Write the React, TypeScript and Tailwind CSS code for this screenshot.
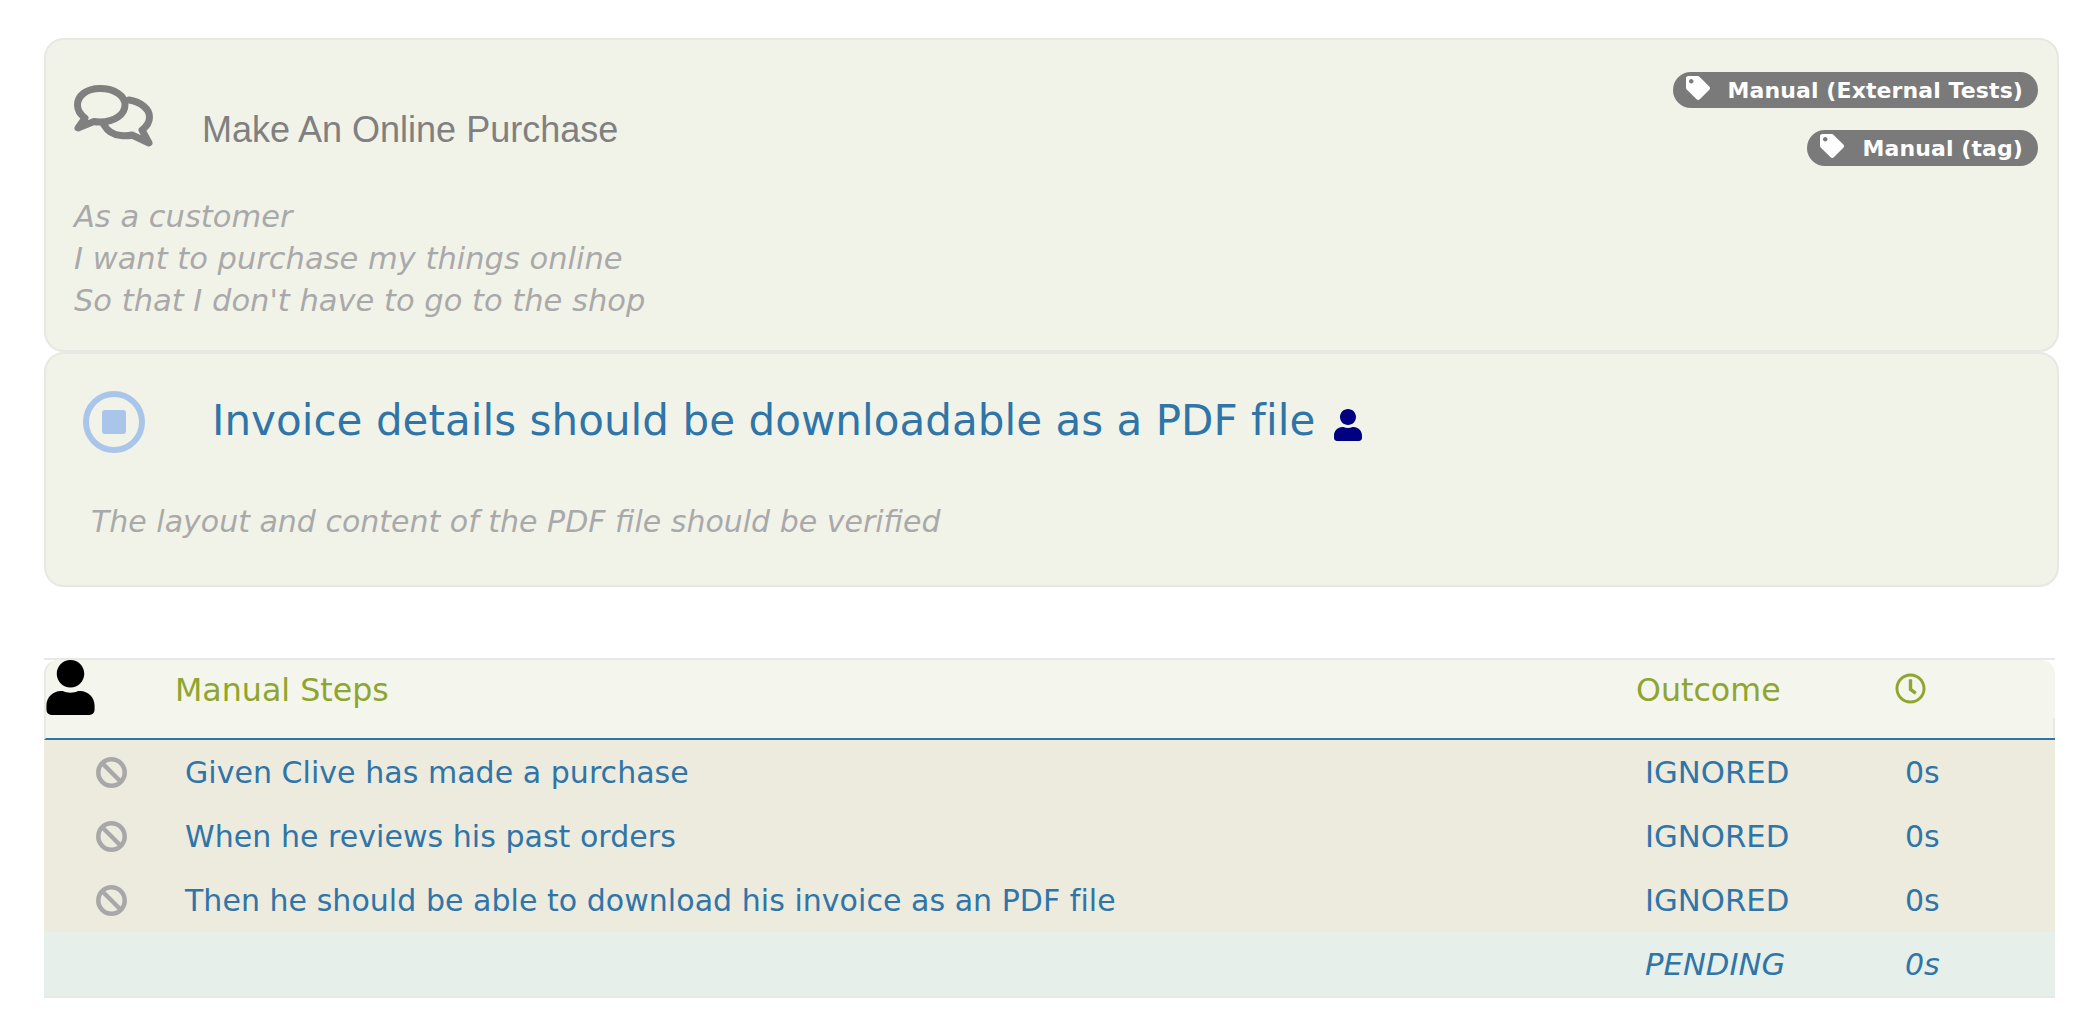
import React from 'react';
import { FaRegClock, FaTag, FaUser } from 'react-icons/fa';

const steps = [
  'Given Clive has made a purchase',
  'When he reviews his past orders',
  'Then he should be able to download his invoice as an PDF file',
];

const ChatIcon = () => (
  <svg viewBox="0 0 79 62" className="w-[79px] h-[62px] shrink-0" fill="none" stroke="#808080" strokeWidth="7" strokeLinejoin="round" strokeLinecap="round">
    <path d="M26 3.5C12 3.5 3.5 11 3.5 20C3.5 26 7 30 11 33L4 43L20 36.5C22 37 24 37 26 37C41 37 51 29 51 20C51 11 41 3.5 26 3.5Z" />
    <path d="M55 15C67 17 75.5 24 75.5 32C75.5 38 72 42 68 45L75 58L58 50C54 51 50 51 47 50.5C40 50 34 47 30 40" />
  </svg>
);

const StopIcon = () => (
  <svg viewBox="0 0 62 62" className="w-[62px] h-[62px] shrink-0">
    <circle cx="31" cy="31" r="28" fill="none" stroke="#a9c6ea" strokeWidth="6" />
    <rect x="19" y="19" width="24" height="24" rx="3" fill="#a9c6ea" />
  </svg>
);

const BanIcon = () => (
  <svg viewBox="0 0 31 31" className="w-[31px] h-[31px]" fill="none" stroke="#a8a8a8" strokeWidth="4.5">
    <circle cx="15.5" cy="15.5" r="13.2" />
    <path d="M6.5 6.5L24.5 24.5" />
  </svg>
);

const Tag: React.FC<{ label: string }> = ({ label }) => (
  <div className="flex items-center h-9 rounded-full bg-[#7a7a7a] text-white pl-[13px] pr-[15px] font-bold text-[22px] tracking-[0.1px]">
    <FaTag className="w-6 h-6 mr-[18px] -mt-1" />
    <span>{label}</span>
  </div>
);

export default function App() {
  return (
    <div className="min-h-[1018px] bg-white pl-[44px] pr-[41px] pt-[38px] font-['DejaVu_Sans',sans-serif]">
      <div className="h-[314px] rounded-[20px] border-2 border-[#e7e8e1] bg-[#f1f3e9] pl-[28px] pr-[19px] pt-[32px]">
        <div className="flex justify-between items-start">
          <div className="flex items-start pt-[13px]">
            <ChatIcon />
            <h1 className="ml-[49px] mt-[25px] text-[36px] leading-10 text-[#808080] font-['Liberation_Sans',sans-serif]">Make An Online Purchase</h1>
          </div>
          <div className="flex flex-col items-end gap-[22px]">
            <Tag label="Manual (External Tests)" />
            <Tag label="Manual (tag)" />
          </div>
        </div>
        <div className="mt-[30px] text-[30.5px] leading-[42px] italic text-[#a9a9a9]">
          <p>As a customer</p>
          <p>I want to purchase my things online</p>
          <p>So that I don't have to go to the shop</p>
        </div>
      </div>

      <div className="h-[235px] rounded-[20px] border-2 border-[#e7e8e1] bg-[#f1f3e9] pl-[37px] pt-[37px]">
        <div className="flex items-center">
          <StopIcon />
          <h2 className="ml-[67px] -mt-[2px] text-[42px] leading-[62px] tracking-[0.05px] text-[#2f75a8]">Invoice details should be downloadable as a PDF file</h2>
          <FaUser className="ml-[19px] w-7 h-8 text-[#000080] mt-[6px]" />
        </div>
        <p className="ml-[8px] mt-[48px] text-[30px] leading-[42px] italic text-[#a9a9a9]">The layout and content of the PDF file should be verified</p>
      </div>

      <div className="mt-[71px] mr-[4px] border-t-2 border-b-2 border-[#e8e9e4] text-[#2f75a8] text-[30px]">
        <div className="relative flex h-[78px] rounded-t-[14px] border-l-2 border-l-[#e8e9e4] bg-[#f4f5ed] text-[#8ea52f] text-[31.7px] border-b-2 border-b-[#2f75a8] box-content after:absolute after:right-0 after:bottom-0 after:w-[2px] after:h-5 after:bg-[#e8e9e4]">
          <div className="w-[129px]"><FaUser className="w-[49px] h-[55px] text-black" /></div>
          <div className="flex-1 pt-[10px] leading-10">Manual Steps</div>
          <div className="w-[259px] pt-[10px] leading-10">Outcome</div>
          <div className="w-[160px] pt-[13px]"><FaRegClock className="w-[31px] h-[31px]" /></div>
        </div>
        {steps.map(step => (
          <div key={step} className="flex h-16 items-center bg-[#edeade]">
            <div className="w-[132px] pl-[52px]"><BanIcon /></div>
            <div className="flex-1 pl-[9px] tracking-[0.04px]">{step}</div>
            <div className="w-[259px] pl-[9px] pt-[2px] text-[30.7px]">IGNORED</div>
            <div className="w-[160px] pl-[10px] pt-[1px]">0s</div>
          </div>
        ))}
        <div className="flex h-16 items-center bg-[#e6efe9] italic">
          <div className="w-[132px]" />
          <div className="flex-1" />
          <div className="w-[259px] pl-[9px] pt-[2px] text-[30.7px]">PENDING</div>
          <div className="w-[160px] pl-[10px] pt-[1px]">0s</div>
        </div>
      </div>
    </div>
  );
}
